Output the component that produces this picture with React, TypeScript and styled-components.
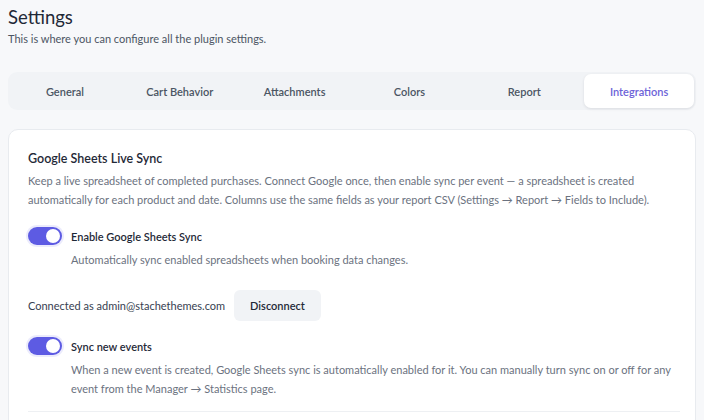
import React, { useState } from "react";
import styled, { createGlobalStyle } from "styled-components";

const GlobalStyle = createGlobalStyle`
  html, body {
    margin: 0;
    padding: 0;
    background: #f7f8fa;
    font-family: "Segoe UI", Lato, "Noto Sans", sans-serif;
    color: #1f2937;
    overflow: hidden;
  }
  * { box-sizing: border-box; }
`;

const tabs = [
  "General",
  "Cart Behavior",
  "Attachments",
  "Colors",
  "Report",
  "Integrations",
];

const Page = styled.div`
  padding: 3px 8px 0 8px;
  width: 704px;
  height: 420px;
`;

const Title = styled.h1`
  margin: 0;
  font-size: 18.5px;
  line-height: 28px;
  font-weight: 400;
  color: #1f2937;
`;

const Subtitle = styled.p`
  margin: 0;
  font-size: 11px;
  line-height: 16px;
  color: #4b5563;
`;

const TabBar = styled.div`
  margin-top: 25px;
  display: grid;
  grid-template-columns: repeat(6, 1fr);
  gap: 5px;
  padding: 2px;
  background: #f1f3f6;
  border-radius: 9px;
  height: 38px;
`;

const Tab = styled.button<{ $active?: boolean }>`
  border: none;
  font-family: inherit;
  font-size: 11px;
  font-weight: 600;
  border-radius: 7px;
  cursor: pointer;
  color: ${(p) => (p.$active ? "#6d63d8" : "#4b5563")};
  background: ${(p) => (p.$active ? "#ffffff" : "transparent")};
  box-shadow: ${(p) =>
    p.$active ? "0 1px 3px rgba(15, 23, 42, 0.1)" : "none"};
`;

const Card = styled.section`
  margin-top: 19px;
  background: #ffffff;
  border: 1px solid #e8ebef;
  border-radius: 10px;
  padding: 19px 15px 0 19px;
  height: 320px;
`;

const SectionTitle = styled.h2`
  margin: 0;
  font-size: 12.5px;
  line-height: 20px;
  font-weight: 600;
  color: #1f2937;
`;

const Description = styled.p<{ $indent?: boolean }>`
  margin: ${(p) => (p.$indent ? "5px 0 0 43px" : "2px 0 0 0")};
  font-size: 11px;
  line-height: 19px;
  color: #6b7280;
`;

const ToggleRow = styled.div<{ $gap?: number }>`
  display: flex;
  align-items: center;
  gap: 9px;
  margin-top: ${(p) => p.$gap ?? 18}px;
`;

const Switch = styled.button<{ $on: boolean }>`
  position: relative;
  width: 34px;
  height: 18px;
  border-radius: 9px;
  border: none;
  padding: 0;
  cursor: pointer;
  background: ${(p) => (p.$on ? "#5d5be3" : "#d1d5db")};
  box-shadow: 0 0 0 2px rgba(93, 91, 227, 0.12);

  &::after {
    content: "";
    position: absolute;
    top: 2px;
    left: ${(p) => (p.$on ? "18px" : "2px")};
    width: 14px;
    height: 14px;
    border-radius: 50%;
    background: #ffffff;
  }
`;

const ToggleLabel = styled.span`
  font-size: 11px;
  font-weight: 600;
  color: #1f2937;
`;

const ConnectedRow = styled.div`
  display: flex;
  align-items: center;
  gap: 9px;
  margin-top: 21px;
`;

const ConnectedText = styled.span`
  font-size: 11px;
  color: #374151;
`;

const SecondaryButton = styled.button`
  border: none;
  background: #f1f3f6;
  border-radius: 6px;
  height: 31px;
  padding: 0 16px;
  font-family: inherit;
  font-size: 11px;
  font-weight: 600;
  color: #1f2937;
  cursor: pointer;
`;

const Divider = styled.hr`
  border: none;
  border-top: 1px solid #eef0f3;
  margin: 13px 0 0 0;
`;

const Toggle = ({ label, gap }: { label: string; gap?: number }) => {
  const [on, setOn] = useState(true);
  return (
    <ToggleRow $gap={gap}>
      <Switch $on={on} onClick={() => setOn(!on)} aria-label={label} />
      <ToggleLabel>{label}</ToggleLabel>
    </ToggleRow>
  );
};

export default function App() {
  const [active, setActive] = useState("Integrations");

  return (
    <Page>
      <GlobalStyle />
      <Title>Settings</Title>
      <Subtitle>This is where you can configure all the plugin settings.</Subtitle>

      <TabBar>
        {tabs.map((t) => (
          <Tab key={t} $active={t === active} onClick={() => setActive(t)}>
            {t}
          </Tab>
        ))}
      </TabBar>

      <Card>
        <SectionTitle>Google Sheets Live Sync</SectionTitle>
        <Description>
          Keep a live spreadsheet of completed purchases. Connect Google once,
          then enable sync per event — a spreadsheet is created automatically
          for each product and date. Columns use the same fields as your report
          CSV (Settings → Report → Fields to Include).
        </Description>

        <Toggle label="Enable Google Sheets Sync" />
        <Description $indent>
          Automatically sync enabled spreadsheets when booking data changes.
        </Description>

        <ConnectedRow>
          <ConnectedText>Connected as admin@stachethemes.com</ConnectedText>
          <SecondaryButton>Disconnect</SecondaryButton>
        </ConnectedRow>

        <Toggle label="Sync new events" gap={16} />
        <Description $indent>
          When a new event is created, Google Sheets sync is automatically
          enabled for it. You can manually turn sync on or off for any event
          from the Manager → Statistics page.
        </Description>

        <Divider />
      </Card>
    </Page>
  );
}
